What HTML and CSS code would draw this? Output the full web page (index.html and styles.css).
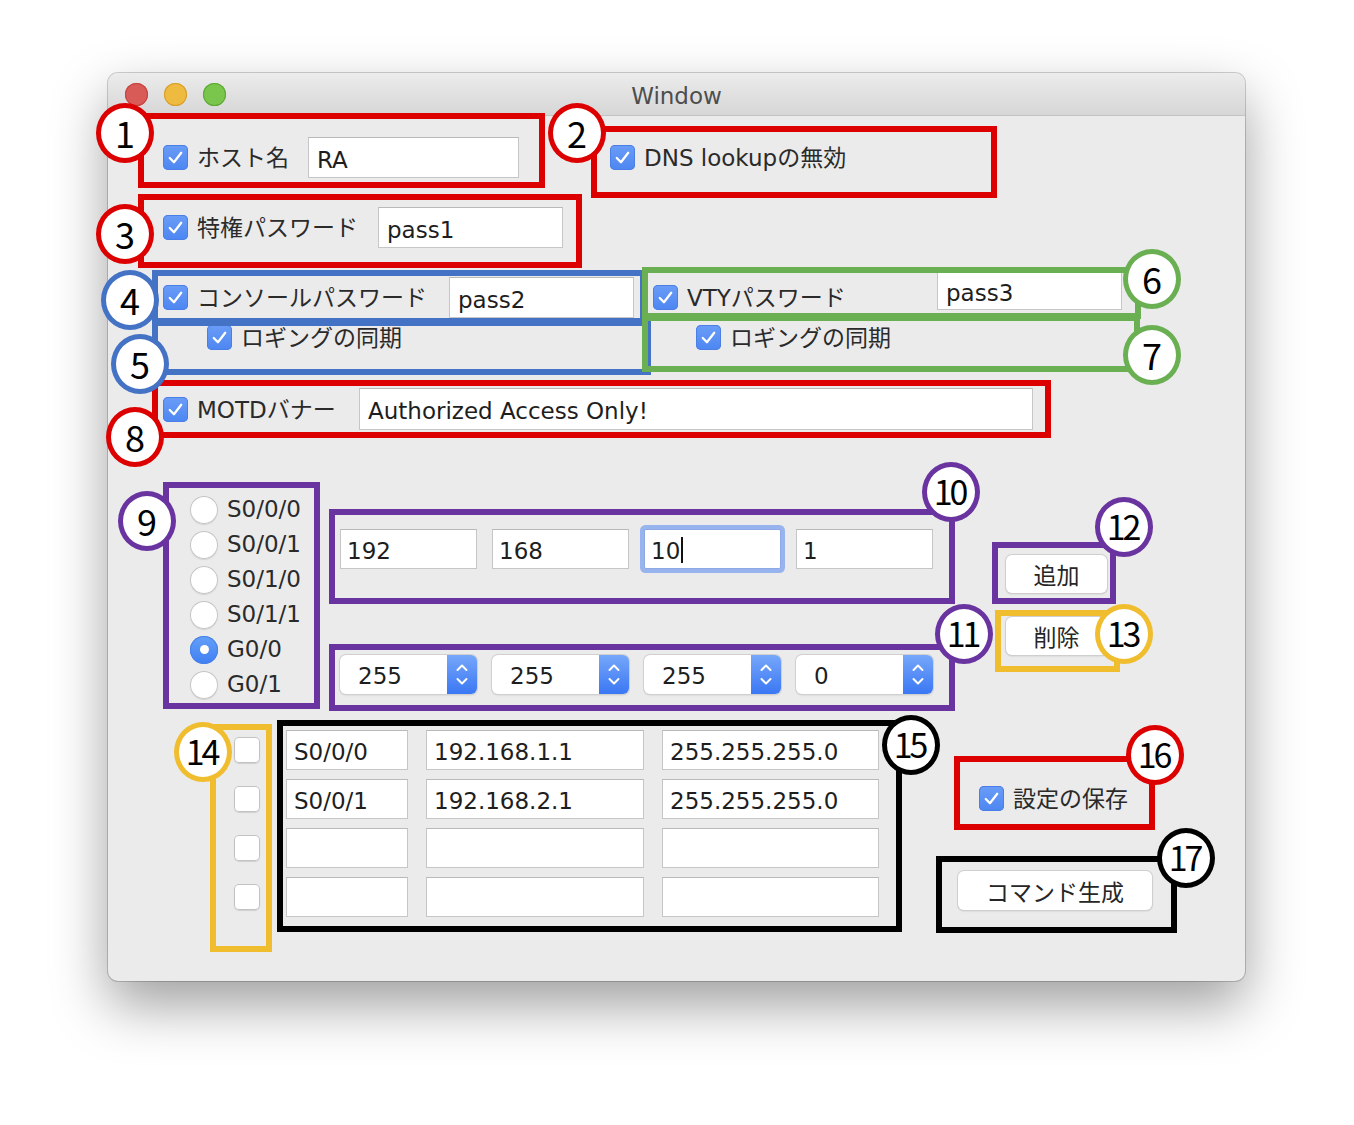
FILE: index.html
```html
<!DOCTYPE html>
<html lang="ja">
<head>
<meta charset="utf-8">
<title>Window</title>
<link rel="stylesheet" href="styles.css">
</head>
<body>
<div class="stage">
  <div class="window">
    <div class="titlebar">
      <div class="lights">
        <span class="light red"></span>
        <span class="light yellow"></span>
        <span class="light green"></span>
      </div>
      <div class="title">Window</div>
    </div>
    <div class="content">
      <!-- row 1 -->
      <div class="row row1">
        <div class="chk-box w-host">
          <span class="cb on"><svg viewBox="0 0 24 24"><path d="M6.5 12.5 L10.5 16.5 L17.5 7.5"/></svg></span>
          <span class="lbl">ホスト名</span>
        </div>
        <div class="field w-host-f"><span>RA</span></div>
        <div class="chk-box dns">
          <span class="cb on"><svg viewBox="0 0 24 24"><path d="M6.5 12.5 L10.5 16.5 L17.5 7.5"/></svg></span>
          <span class="lbl">DNS lookupの無効</span>
        </div>
      </div>
      <!-- row 3 -->
      <div class="row row3">
        <div class="chk-box w-priv">
          <span class="cb on"><svg viewBox="0 0 24 24"><path d="M6.5 12.5 L10.5 16.5 L17.5 7.5"/></svg></span>
          <span class="lbl">特権パスワード</span>
        </div>
        <div class="field w-pw"><span>pass1</span></div>
      </div>
      <!-- row 4 -->
      <div class="row row4">
        <div class="chk-box w-con">
          <span class="cb on"><svg viewBox="0 0 24 24"><path d="M6.5 12.5 L10.5 16.5 L17.5 7.5"/></svg></span>
          <span class="lbl">コンソールパスワード</span>
        </div>
        <div class="field w-pw"><span>pass2</span></div>
        <div class="chk-box w-vty">
          <span class="cb on"><svg viewBox="0 0 24 24"><path d="M6.5 12.5 L10.5 16.5 L17.5 7.5"/></svg></span>
          <span class="lbl">VTYパスワード</span>
        </div>
        <div class="field w-pw vty-f"><span>pass3</span></div>
      </div>
      <!-- row 5 -->
      <div class="row row5">
        <div class="chk-box log1">
          <span class="cb on"><svg viewBox="0 0 24 24"><path d="M6.5 12.5 L10.5 16.5 L17.5 7.5"/></svg></span>
          <span class="lbl">ロギングの同期</span>
        </div>
        <div class="chk-box log2">
          <span class="cb on"><svg viewBox="0 0 24 24"><path d="M6.5 12.5 L10.5 16.5 L17.5 7.5"/></svg></span>
          <span class="lbl">ロギングの同期</span>
        </div>
      </div>
      <!-- row 8 -->
      <div class="row row8">
        <div class="chk-box w-motd">
          <span class="cb on"><svg viewBox="0 0 24 24"><path d="M6.5 12.5 L10.5 16.5 L17.5 7.5"/></svg></span>
          <span class="lbl">MOTDバナー</span>
        </div>
        <div class="field w-motd-f"><span>Authorized Access Only!</span></div>
      </div>

      <!-- middle -->
      <div class="middle">
        <div class="radios">
          <div class="radio-row"><span class="radio"></span><span class="lbl">S0/0/0</span></div>
          <div class="radio-row"><span class="radio"></span><span class="lbl">S0/0/1</span></div>
          <div class="radio-row"><span class="radio"></span><span class="lbl">S0/1/0</span></div>
          <div class="radio-row"><span class="radio"></span><span class="lbl">S0/1/1</span></div>
          <div class="radio-row"><span class="radio sel"></span><span class="lbl">G0/0</span></div>
          <div class="radio-row"><span class="radio"></span><span class="lbl">G0/1</span></div>
        </div>
        <div class="addr">
          <div class="ip-row">
            <div class="field ip"><span>192</span></div>
            <div class="field ip"><span>168</span></div>
            <div class="field ip focus"><span>10</span><i class="caret"></i></div>
            <div class="field ip"><span>1</span></div>
          </div>
          <div class="mask-row">
            <div class="spin"><span class="sv">255</span><span class="step"><svg viewBox="0 0 30 39"><path d="M10.5 15 L15 10.5 L19.5 15 M10.5 24 L15 28.5 L19.5 24"/></svg></span></div>
            <div class="spin"><span class="sv">255</span><span class="step"><svg viewBox="0 0 30 39"><path d="M10.5 15 L15 10.5 L19.5 15 M10.5 24 L15 28.5 L19.5 24"/></svg></span></div>
            <div class="spin"><span class="sv">255</span><span class="step"><svg viewBox="0 0 30 39"><path d="M10.5 15 L15 10.5 L19.5 15 M10.5 24 L15 28.5 L19.5 24"/></svg></span></div>
            <div class="spin"><span class="sv">0</span><span class="step"><svg viewBox="0 0 30 39"><path d="M10.5 15 L15 10.5 L19.5 15 M10.5 24 L15 28.5 L19.5 24"/></svg></span></div>
          </div>
        </div>
        <div class="btns">
          <div class="btn small">追加</div>
          <div class="btn small">削除</div>
        </div>
      </div>

      <!-- bottom -->
      <div class="bottom">
        <div class="cb-col">
          <div class="cb-cell"><span class="cb off"></span></div>
          <div class="cb-cell"><span class="cb off"></span></div>
          <div class="cb-cell"><span class="cb off"></span></div>
          <div class="cb-cell"><span class="cb off"></span></div>
        </div>
        <div class="table">
          <div class="field"><span>S0/0/0</span></div>
          <div class="field"><span>192.168.1.1</span></div>
          <div class="field"><span>255.255.255.0</span></div>
          <div class="field"><span>S0/0/1</span></div>
          <div class="field"><span>192.168.2.1</span></div>
          <div class="field"><span>255.255.255.0</span></div>
          <div class="field"></div>
          <div class="field"></div>
          <div class="field"></div>
          <div class="field"></div>
          <div class="field"></div>
          <div class="field"></div>
        </div>
        <div class="right-col">
          <div class="chk-box save">
            <span class="cb on"><svg viewBox="0 0 24 24"><path d="M6.5 12.5 L10.5 16.5 L17.5 7.5"/></svg></span>
            <span class="lbl">設定の保存</span>
          </div>
          <div class="btn big">コマンド生成</div>
        </div>
      </div>
    </div>
  </div>

  <!-- annotation overlays -->
  <div class="notes">
    <div class="box red a1"></div>
    <div class="box red a2"></div>
    <div class="box red a3"></div>
    <div class="box blue a4"></div>
    <div class="box blue a5"></div>
    <div class="box green a6"></div>
    <div class="box green a7"></div>
    <div class="box red a8"></div>
    <div class="box purple a9"></div>
    <div class="box purple a10"></div>
    <div class="box purple a11"></div>
    <div class="box purple a12"></div>
    <div class="box yellow a13"></div>
    <div class="box yellow a14"></div>
    <div class="box black a15"></div>
    <div class="box red a16"></div>
    <div class="box black a17"></div>

    <div class="num red n1">1</div>
    <div class="num red n2">2</div>
    <div class="num red n3">3</div>
    <div class="num blue n4">4</div>
    <div class="num blue n5">5</div>
    <div class="num green n6">6</div>
    <div class="num green n7">7</div>
    <div class="num red n8">8</div>
    <div class="num purple n9">9</div>
    <div class="num purple n10 two">10</div>
    <div class="num purple n11 two">11</div>
    <div class="num purple n12 two">12</div>
    <div class="num yellow n13 two">13</div>
    <div class="num yellow n14 two">14</div>
    <div class="num black n15 two">15</div>
    <div class="num red n16 two">16</div>
    <div class="num black n17 two">17</div>
  </div>
</div>
</body>
</html>
```
FILE: styles.css
```css
* { box-sizing: border-box; }

html, body {
  margin: 0;
  padding: 0;
  background: #ffffff;
}

body {
  width: 1354px;
  height: 1125px;
  overflow: hidden;
  font-family: "DejaVu Sans", "Noto Sans CJK JP", sans-serif;
  color: #262626;
}

.stage {
  position: relative;
  width: 1354px;
  height: 1125px;
  padding: 73px 0 0 108px;
}

/* ---------- window ---------- */
.window {
  width: 1137px;
  height: 908px;
  background: #ebebeb;
  border-radius: 10px;
  box-shadow: 0 0 0 1px rgba(0, 0, 0, 0.18), 0 24px 55px rgba(0, 0, 0, 0.38);
  overflow: hidden;
}

.titlebar {
  height: 43px;
  position: relative;
  background: linear-gradient(#ececec, #d6d6d6);
  border-bottom: 1px solid #c3c3c3;
  display: flex;
  align-items: center;
  justify-content: center;
}

.lights {
  position: absolute;
  left: 17px;
  top: 10px;
  display: flex;
  gap: 16px;
}

.light {
  width: 23px;
  height: 23px;
  border-radius: 50%;
}
.light.red { background: #d95b57; box-shadow: inset 0 0 0 1px #c6423e; }
.light.yellow { background: #eebb40; box-shadow: inset 0 0 0 1px #d59f2a; }
.light.green { background: #7ac54c; box-shadow: inset 0 0 0 1px #5ca934; }

.title {
  font-family: "DejaVu Sans", "Noto Sans", sans-serif;
  font-size: 23px;
  color: #4d4d4d;
  padding-top: 4px;
}

.content {
  display: flex;
  flex-direction: column;
}

/* ---------- generic controls ---------- */
.row {
  display: flex;
  align-items: center;
}

.chk-box {
  display: flex;
  align-items: center;
  flex: none;
}

.lbl {
  font-size: 23px;
  line-height: 1;
  color: #2a2a2a;
  margin-left: 9px;
  padding-top: 2px;
  white-space: nowrap;
}

.cb {
  width: 25px;
  height: 25px;
  border-radius: 5px;
  flex: none;
  display: block;
}
.cb.on {
  background: linear-gradient(#6a9df7, #4d86f2);
  box-shadow: inset 0 0 0 1px #4b7fe6;
}
.cb.on svg {
  width: 25px;
  height: 25px;
  display: block;
}
.cb.on path {
  fill: none;
  stroke: #ffffff;
  stroke-width: 2.2;
  stroke-linecap: round;
  stroke-linejoin: round;
}
.cb.off {
  background: #ffffff;
  box-shadow: inset 0 0 0 1px #c2c2c2, 0 1px 1px rgba(0, 0, 0, 0.12);
}

.field {
  height: 41px;
  background: #ffffff;
  border: 1px solid #c6c6c6;
  border-top-color: #b9b9b9;
  display: flex;
  align-items: center;
  padding-left: 8px;
  padding-top: 4px;
  font-size: 23px;
  color: #1e1e1e;
  white-space: nowrap;
  flex: none;
}

/* ---------- top rows ---------- */
.row1 { margin-top: 21px; height: 41px; }
.w-host { width: 145px; margin-left: 55px; }
.w-host-f { width: 211px; }
.dns { margin-left: 91px; }

.row3 { margin-top: 29px; height: 41px; }
.w-priv { width: 215px; margin-left: 55px; }
.w-pw { width: 185px; }

.row4 { margin-top: 29px; height: 41px; }
.w-con { width: 286px; margin-left: 55px; }
.w-vty { width: 284px; margin-left: 19px; }
.vty-f { height: 38px; margin-bottom: 14px; }

.row5 { margin-top: 6px; height: 26px; }
.log1 { margin-left: 99px; width: 489px; }

.row8 { margin-top: 38px; height: 42px; }
.w-motd { width: 196px; margin-left: 55px; }
.w-motd-f { width: 674px; height: 42px; }

/* ---------- middle ---------- */
.middle {
  display: flex;
  align-items: flex-start;
  margin-top: 62px;
}

.radios {
  margin-left: 82px;
  width: 150px;
  display: flex;
  flex-direction: column;
}

.radio-row {
  height: 35px;
  display: flex;
  align-items: center;
}

.radio {
  width: 28px;
  height: 28px;
  border-radius: 50%;
  background: #ffffff;
  box-shadow: inset 0 0 0 1px #c4c4c4, 0 1px 1px rgba(0, 0, 0, 0.1);
  flex: none;
  display: flex;
  align-items: center;
  justify-content: center;
}
.radio.sel {
  background: linear-gradient(#64a0f8, #3f7ff3);
  box-shadow: inset 0 0 0 1px #4a80e8;
}
.radio.sel::after {
  content: "";
  width: 9px;
  height: 9px;
  border-radius: 50%;
  background: #ffffff;
}
.radio-row .lbl { margin-left: 9px; padding-top: 0; }

.addr {
  width: 597px;
  margin-top: 37px;
  display: flex;
  flex-direction: column;
}

.ip-row, .mask-row {
  display: flex;
  gap: 15px;
}

.field.ip {
  width: 137px;
  height: 40px;
  padding-left: 6px;
}
.field.ip.focus {
  border-color: #8fa9e6;
  box-shadow: 0 0 0 4px #98b4ef;
  border-radius: 2px;
}
.caret {
  display: block;
  width: 1.5px;
  height: 26px;
  background: #111;
  margin-left: 1px;
  margin-top: -3px;
}

.mask-row { margin-top: 86px; }

.spin {
  width: 137px;
  height: 39px;
  background: #ffffff;
  border-radius: 6px;
  box-shadow: 0 0 0 1px #d0d0d0, 0 1px 2px rgba(0, 0, 0, 0.18);
  display: flex;
  align-items: center;
  justify-content: space-between;
  overflow: hidden;
}
.sv {
  font-size: 23px;
  color: #1e1e1e;
  padding-left: 18px;
  padding-top: 2px;
}
.step {
  width: 30px;
  height: 39px;
  background: linear-gradient(#76a7fa, #3a77f3);
  display: block;
}
.step svg { width: 30px; height: 39px; display: block; }
.step path {
  fill: none;
  stroke: #ffffff;
  stroke-width: 2;
  stroke-linecap: round;
  stroke-linejoin: round;
}

.btns {
  margin-left: 69px;
  margin-top: 63px;
  display: flex;
  flex-direction: column;
  gap: 24px;
}

.btn {
  background: #ffffff;
  border-radius: 6px;
  box-shadow: 0 0 0 1px #cfcfcf, 0 1px 2px rgba(0, 0, 0, 0.2);
  display: flex;
  align-items: center;
  justify-content: center;
  font-size: 23px;
  color: #262626;
}
.btn.small { width: 101px; height: 38px; }
.btn.big { width: 194px; height: 39px; margin-top: 60px; }

/* ---------- bottom ---------- */
.bottom {
  display: flex;
  align-items: flex-start;
  margin-top: 28px;
}

.cb-col {
  margin-left: 126px;
  display: flex;
  flex-direction: column;
  gap: 9px;
}
.cb-cell {
  height: 40px;
  display: flex;
  align-items: center;
}
.cb-col .cb { width: 26px; height: 26px; }

.table {
  margin-left: 26px;
  display: grid;
  grid-template-columns: 122px 218px 217px;
  grid-auto-rows: 40px;
  column-gap: 18px;
  row-gap: 9px;
}
.table .field { height: 40px; width: auto; padding-left: 7px; }

.right-col {
  margin-left: 79px;
  display: flex;
  flex-direction: column;
}
.save {
  margin-top: 56px;
  margin-left: 21px;
  height: 25px;
}

/* ---------- annotations ---------- */
.notes {
  position: absolute;
  left: 0;
  top: 0;
  width: 1354px;
  height: 1125px;
  pointer-events: none;
}

.box {
  position: absolute;
  border: 6px solid;
}
.box.red { border-color: #dc0000; }
.box.blue { border-color: #4472c4; }
.box.green { border-color: #6aaf52; }
.box.purple { border-color: #6a34a0; }
.box.yellow { border-color: #f0bd2e; }
.box.black { border-color: #000000; }

.a1 { left: 138px; top: 113px; width: 407px; height: 75px; }
.a2 { left: 591px; top: 126px; width: 406px; height: 72px; }
.a3 { left: 138px; top: 194px; width: 444px; height: 74px; }
.a4 { left: 152px; top: 270px; width: 494px; height: 54px; }
.a5 { left: 152px; top: 320px; width: 499px; height: 55px; }
.a6 { left: 642px; top: 267px; width: 499px; height: 52px; }
.a7 { left: 642px; top: 315px; width: 498px; height: 57px; }
.a8 { left: 152px; top: 380px; width: 899px; height: 58px; }
.a9 { left: 163px; top: 482px; width: 157px; height: 227px; }
.a10 { left: 329px; top: 509px; width: 626px; height: 95px; }
.a11 { left: 329px; top: 644px; width: 626px; height: 67px; }
.a12 { left: 992px; top: 542px; width: 124px; height: 62px; }
.a13 { left: 995px; top: 610px; width: 125px; height: 62px; }
.a14 { left: 210px; top: 724px; width: 62px; height: 228px; }
.a15 { left: 277px; top: 720px; width: 625px; height: 212px; }
.a16 { left: 954px; top: 756px; width: 201px; height: 74px; }
.a17 { left: 936px; top: 856px; width: 241px; height: 77px; }

.num {
  position: absolute;
  width: 58px;
  height: 60px;
  margin-left: -29px;
  margin-top: -30px;
  border-radius: 50%;
  border: 5px solid;
  background: #ffffff;
  display: flex;
  align-items: center;
  justify-content: center;
  font-family: "Noto Sans CJK JP", "Noto Sans", sans-serif;
  font-size: 36px;
  line-height: 1;
  color: #000000;
  padding-bottom: 3px;
}
.num.two { font-size: 34px; letter-spacing: -3px; padding-right: 3px; }
.num.red { border-color: #dc0000; }
.num.blue { border-color: #4472c4; }
.num.green { border-color: #6aaf52; }
.num.purple { border-color: #6a34a0; }
.num.yellow { border-color: #f0bd2e; }
.num.black { border-color: #000000; }

.n1 { left: 125px; top: 133px; }
.n2 { left: 577px; top: 133px; }
.n3 { left: 125px; top: 234px; }
.n4 { left: 130px; top: 300px; }
.n5 { left: 140px; top: 364px; }
.n6 { left: 1152px; top: 279px; }
.n7 { left: 1152px; top: 355px; }
.n8 { left: 135px; top: 437px; }
.n9 { left: 147px; top: 521px; }
.n10 { left: 951px; top: 492px; }
.n11 { left: 964px; top: 634px; }
.n12 { left: 1124px; top: 527px; }
.n13 { left: 1124px; top: 634px; }
.n14 { left: 203px; top: 752px; }
.n15 { left: 911px; top: 745px; }
.n16 { left: 1155px; top: 755px; }
.n17 { left: 1186px; top: 858px; }
```
